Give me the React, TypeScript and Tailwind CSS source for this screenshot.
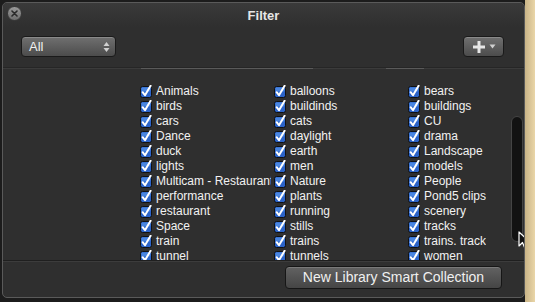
import React from 'react';

const col1 = ['Animals', 'birds', 'cars', 'Dance', 'duck', 'lights', 'Multicam - Restaurant', 'performance', 'restaurant', 'Space', 'train', 'tunnel'];
const col2 = ['balloons', 'buildinds', 'cats', 'daylight', 'earth', 'men', 'Nature', 'plants', 'running', 'stills', 'trains', 'tunnels'];
const col3 = ['bears', 'buildings', 'CU', 'drama', 'Landscape', 'models', 'People', 'Pond5 clips', 'scenery', 'tracks', 'trains. tracks', 'women'];

const Check: React.FC = () => (
  <svg width="13" height="13" viewBox="0 0 13 13" className="shrink-0">
    <rect x="0.5" y="1.5" width="11" height="11" rx="2" fill="#2c64c8" stroke="#111" />
    <rect x="1.5" y="2.5" width="9" height="4" rx="1" fill="#4a86e0" />
    <path d="M2.6 7.2 L5 10.2 L10.6 0.8" fill="none" stroke="#fff" strokeWidth="2" strokeLinecap="round" strokeLinejoin="round" />
  </svg>
);

const Column: React.FC<{ items: string[]; width: string }> = ({ items, width }) => (
  <div className={`flex flex-col shrink-0 overflow-hidden ${width}`}>
    {items.map((t) => (
      <div key={t} className="flex items-center gap-[3px] h-[15px] whitespace-nowrap">
        <Check />
        <span className="text-[12px] leading-[15px] text-[#f2f2f2]">{t}</span>
      </div>
    ))}
  </div>
);

const App: React.FC = () => {
  return (
    <div className="w-[535px] h-[302px] bg-[#1c1c1c] flex overflow-hidden" style={{ fontFamily: '"Liberation Sans", Arial, sans-serif' }}>
      <div className="pl-[2px] pt-[2px]">
        <div className="w-[523px] h-[296px] rounded-[5px] border border-[#5a5a5a] bg-[#2f2f2f] flex flex-col overflow-hidden">
          {/* title bar */}
          <div className="relative h-[24px] flex items-center justify-center bg-gradient-to-b from-[#3a3a3a] to-[#2f2f2f]">
            <div className="absolute left-[4px] top-[3px] w-[15px] h-[15px] rounded-full bg-gradient-to-b from-[#9a9a9a] to-[#6e6e6e] border border-[#3a3a3a] flex items-center justify-center">
              <svg width="7" height="7" viewBox="0 0 7 7">
                <path d="M1 1 L6 6 M6 1 L1 6" stroke="#2a2a2a" strokeWidth="1.6" strokeLinecap="round" />
              </svg>
            </div>
            <span className="text-[13px] font-bold text-[#e6e6e6] mt-[1px]">Filter</span>
          </div>

          {/* toolbar */}
          <div className="h-[40px] flex items-start justify-between pl-[18px] pr-[20px] pt-[9px]">
            <div className="w-[95px] h-[21px] rounded-[4px] border border-[#1a1a1a] bg-gradient-to-b from-[#707070] to-[#4c4c4c] shadow-[inset_0_1px_0_#8a8a8a] flex items-center justify-between pl-[7px] pr-[5px]">
              <span className="text-[13px] text-[#f0f0f0]">All</span>
              <svg width="7" height="12" viewBox="0 0 7 12">
                <path d="M3.5 1 L6.5 5 L0.5 5 Z M3.5 11 L6.5 7 L0.5 7 Z" fill="#d0d0d0" />
              </svg>
            </div>
            <div className="w-[41px] h-[21px] rounded-[4px] border border-[#1a1a1a] bg-gradient-to-b from-[#707070] to-[#4c4c4c] shadow-[inset_0_1px_0_#8a8a8a] flex items-center justify-center gap-[3px]">
              <svg width="14" height="14" viewBox="0 0 14 14">
                <path d="M7 1 V13 M1 7 H13" stroke="#e6e6e6" strokeWidth="3" />
              </svg>
              <svg width="7" height="5" viewBox="0 0 7 5">
                <path d="M0.5 0.5 H6.5 L3.5 4.5 Z" fill="#cfcfcf" />
              </svg>
            </div>
          </div>

          {/* separator */}
          <div className="h-[2px] flex bg-[#3b3b3b] border-t border-[#262626]">
            <div className="w-[138px]" />
            <div className="w-[172px] bg-[#5a5a5a]" />
            <div className="w-[73px]" />
            <div className="w-[38px] bg-[#5a5a5a]" />
          </div>

          {/* list */}
          <div className="relative flex-1 overflow-hidden">
            <div className="flex pl-[137px] pt-[15px]">
              <Column items={col1} width="w-[131px] mr-[3px]" />
              <Column items={col2} width="w-[131px] mr-[3px]" />
              <Column items={col3} width="w-[78px]" />
            </div>
            <div className="absolute left-[508px] top-[47px] w-[12px] h-[126px] rounded-full bg-[#121212] border border-[#444]" />
            <svg className="absolute left-[515px] top-[162px]" width="14" height="20" viewBox="0 0 14 20">
              <path d="M1 1 L1 15 L4.5 11.5 L7 17.5 L9.2 16.5 L6.8 10.8 L11.5 10.8 Z" fill="#111" stroke="#fff" strokeWidth="1.2" strokeLinejoin="round" />
            </svg>
          </div>

          {/* footer */}
          <div className="h-[37px] border-t border-[#1f1f1f] shadow-[inset_0_1px_0_#3c3c3c] flex items-start justify-end pr-[22px] pt-[5px]">
            <div className="w-[217px] h-[23px] rounded-[4px] border border-[#161616] bg-gradient-to-b from-[#626262] to-[#454545] shadow-[inset_0_1px_0_#7a7a7a] flex items-center justify-center">
              <span className="text-[14px] text-[#f0f0f0]">New Library Smart Collection</span>
            </div>
          </div>
        </div>
      </div>
      <div className="flex-1 bg-gradient-to-r from-[#c9b487] to-[#ead6a8]" />
    </div>
  );
};

export default App;
